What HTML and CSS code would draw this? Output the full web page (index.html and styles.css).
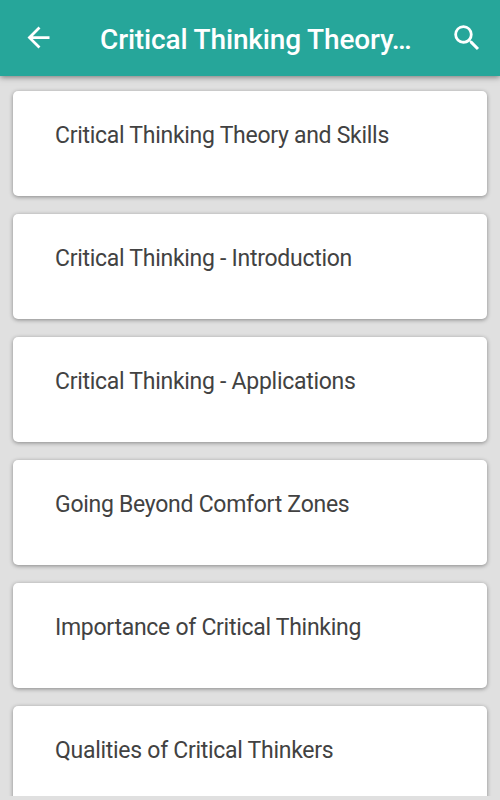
FILE: index.html
```html
<!DOCTYPE html>
<html lang="en">
<head>
<meta charset="utf-8">
<title>Critical Thinking Theory and Skills</title>
<meta name="viewport" content="width=device-width, initial-scale=1.0">
<link rel="stylesheet" href="styles.css">
</head>
<body>

<header class="toolbar">
    <button class="icon-btn" aria-label="Back">
        <svg viewBox="0 0 24 24"><path d="M20 11H7.83l5.59-5.59L12 4l-8 8 8 8 1.41-1.41L7.83 13H20v-2z"/></svg>
    </button>
    <h1>Critical Thinking Theory…</h1>
    <button class="icon-btn search-btn" aria-label="Search">
        <svg viewBox="0 0 24 24"><path d="M15.5 14h-.79l-.28-.27A6.47 6.47 0 0 0 16 9.5 6.5 6.5 0 1 0 9.5 16c1.61 0 3.09-.59 4.23-1.57l.27.28v.79l5 4.99L20.49 19l-4.99-5zm-6 0C7.01 14 5 11.99 5 9.5S7.01 5 9.5 5 14 7.01 14 9.5 11.99 14 9.5 14z"/></svg>
    </button>
</header>

<main class="list">
    <div class="card">Critical Thinking Theory and Skills</div>
    <div class="card">Critical Thinking - Introduction</div>
    <div class="card">Critical Thinking - Applications</div>
    <div class="card">Going Beyond Comfort Zones</div>
    <div class="card">Importance of Critical Thinking</div>
    <div class="card">Qualities of Critical Thinkers</div>
</main>

</body>
</html>
```
FILE: styles.css
```css
* { box-sizing: border-box; }
body { margin: 0; height: 800px; overflow: hidden; display: flex; flex-direction: column; font-family: Roboto, sans-serif; background-color: #e0e0e0; color: #424242; }
.toolbar { flex: none; display: flex; align-items: center; height: 76px; padding: 0 16px 0 22px; background-color: #26a69a; color: #fff; box-shadow: 0 1px 6px rgba(0, 0, 0, 0.5); }
.toolbar h1 { flex: 1; margin: 3px 0 0 45px; font-size: 28px; font-weight: 500; line-height: 34px; letter-spacing: -0.15px; white-space: nowrap; }
.icon-btn { flex: none; width: 33px; height: 33px; margin-bottom: 2px; padding: 0; border: none; background: none; color: #fff; }
.icon-btn svg { display: block; width: 100%; height: 100%; fill: currentColor; }
.search-btn { width: 34px; height: 34px; margin-bottom: 0; }
.list { flex: 1; display: flex; flex-direction: column; gap: 17.85px; min-height: 0; margin-bottom: 4px; padding: 15.3px 13px 0; overflow: hidden; }
.card { flex: none; height: 105px; padding: 30px 42px; border-radius: 5px; background-color: #fff; box-shadow: 0 1px 4px rgba(0, 0, 0, 0.4); font-size: 23px; line-height: 30px; letter-spacing: -0.28px; white-space: nowrap; }
```
